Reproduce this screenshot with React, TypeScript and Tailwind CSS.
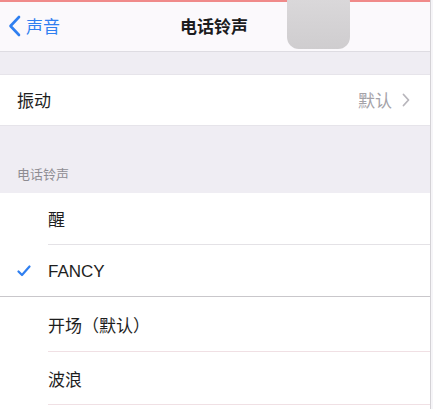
import React from "react";

const font = { fontFamily: '"Noto Sans CJK SC", "Noto Sans", sans-serif' };

function Row({ children, check, sep, sepClass, h }: { children: React.ReactNode; check?: boolean; sep?: boolean; sepClass?: string; h?: string }) {
  return (
    <div className={`relative flex items-center bg-white ${h ?? "h-[52px]"}`}>
      <div className="flex w-[48px] items-center justify-start pl-[17px]">
        {check && (
          <svg width="14" height="12" viewBox="0 0 14 12">
            <path d="M1.5 6.5 L5 10 L12.5 1.5" fill="none" stroke="#2f7ff0" strokeWidth="2.2" strokeLinecap="round" strokeLinejoin="round" />
          </svg>
        )}
      </div>
      <div className="text-[17px] text-[#1e1e1e]">{children}</div>
      {sep && <div className={`absolute bottom-0 right-0 h-px ${sepClass ?? "left-[48px] bg-[#e4e2e6]"}`} />}
    </div>
  );
}

export default function App() {
  return (
    <div className="relative h-[409px] w-[433px] overflow-hidden bg-[#efedf3]" style={font}>
      <div className="flex w-[430px] flex-col">
        {/* nav */}
        <div className="relative flex h-[52px] items-center border-b border-[#dedce2] bg-[#fbf9fc]">
          <div className="absolute left-0 right-0 top-0 h-[2px] bg-[#f08a8a]" />
          <div className="flex items-center pl-[8px] text-[17px] text-[#2f7ff0]">
            <svg width="13" height="22" viewBox="0 0 13 22">
              <path d="M11 2 L2.5 11 L11 20" fill="none" stroke="#2f7ff0" strokeWidth="2.6" strokeLinecap="round" strokeLinejoin="round" />
            </svg>
            <span className="ml-[5px]">声音</span>
          </div>
          <div className="absolute left-[180px] text-[17px] font-semibold text-[#1c1c1e]">电话铃声</div>
          <div className="absolute left-[287px] top-[-10px] h-[59px] w-[63px] rounded-[12px] bg-gradient-to-b from-[#dcdadc] to-[#cfcdcf]" />
        </div>
        <div className="h-[22px]" />
        {/* vibrate */}
        <div className="flex h-[52px] items-center justify-between border-y border-[#e6e4ea] bg-white pl-[17px] pr-[20px]">
          <span className="text-[17px] text-[#1e1e1e]">振动</span>
          <div className="flex items-center gap-[10px] text-[17px] text-[#a4a2a8]">
            <span>默认</span>
            <svg width="8" height="14" viewBox="0 0 8 14">
              <path d="M1.5 1.5 L6.5 7 L1.5 12.5" fill="none" stroke="#b8b6bc" strokeWidth="1.8" strokeLinecap="round" strokeLinejoin="round" />
            </svg>
          </div>
        </div>
        <div className="flex h-[67px] items-end pb-[10px] pl-[17px] text-[13px] text-[#8e8c92]">电话铃声</div>
        <Row sep>醒</Row>
        <Row check sep sepClass="left-0 h-[2px] bg-[#c9c7cb]">
          <span style={{ fontFamily: '"Liberation Sans", Arial, sans-serif' }}>FANCY</span>
        </Row>
        <Row sep h="h-[55px]" sepClass="left-[48px] bg-[#f0e0e4]">开场（默认）</Row>
        <Row sep h="h-[53px]" sepClass="left-[48px] bg-[#f0e0e4]">波浪</Row>
        <div className="h-[20px] bg-white" />
      </div>
      <div className="absolute right-[2px] top-0 h-full w-px bg-[#d4d2d6]" />
      <div className="absolute right-0 top-0 h-full w-[2px] bg-[#f6f5f8]" />
    </div>
  );
}
